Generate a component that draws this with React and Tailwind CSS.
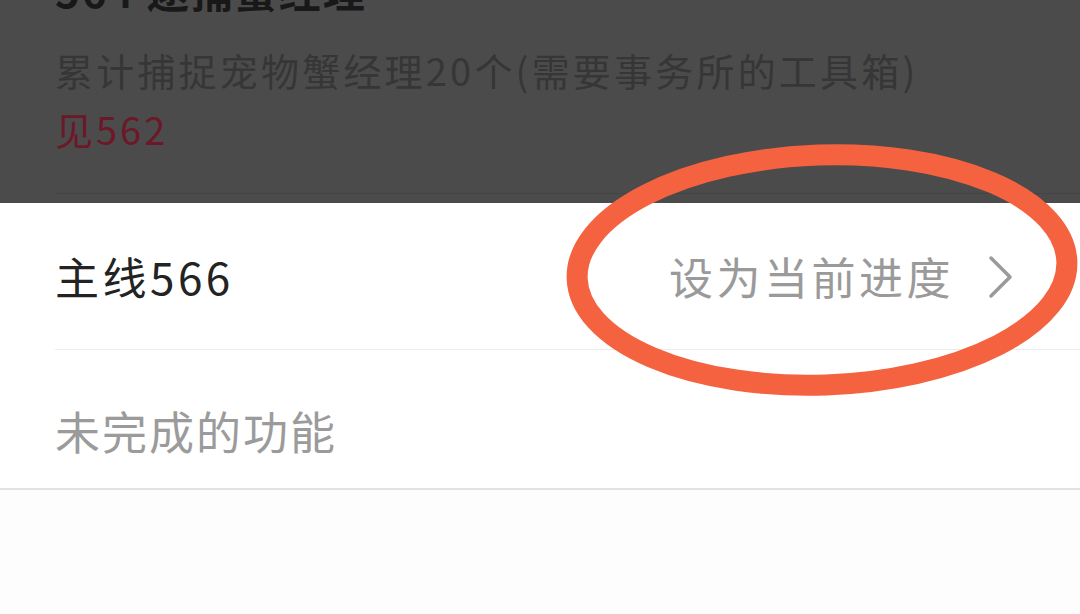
import React from "react";

const cjk = { fontFamily: '"Noto Sans CJK SC", "Noto Sans", sans-serif' };

export default function App() {
  return (
    <div className="relative w-[1080px] h-[614px] overflow-hidden bg-[#fdfdfd]" style={cjk}>
      {/* dimmed list item */}
      <div className="h-[203px] bg-[#4b4b4b] pl-[55px] flex flex-col">
        <div className="mt-[-31px] h-[42px] text-[42px] leading-[42px] font-bold text-[#181818] whitespace-nowrap tracking-[2px]">
          564 逮捕蟹经理
        </div>
        <div className="mt-[40px] text-[38px] leading-[38px] text-[#363636] whitespace-nowrap tracking-[3.2px]">
          累计捕捉宠物蟹经理20个(需要事务所的工具箱)
        </div>
        <div className="mt-[21px] text-[38px] leading-[38px] text-[#6c1828] whitespace-nowrap tracking-[3px]">
          见562
        </div>
        <div className="mt-[45px] h-px bg-[#444444]" />
      </div>

      {/* list rows */}
      <div className="bg-white">
        <div className="ml-[55px] h-[147px] flex items-center justify-between border-b border-[#ececec] pr-[66px]">
          <span className="text-[44px] leading-[44px] text-[#232323] tracking-[3.5px]">主线566</span>
          <div className="flex items-center gap-[34px]">
            <span className="text-[44px] leading-[44px] text-[#9a9a9a] tracking-[3.5px]">设为当前进度</span>
            <svg width="26" height="44" viewBox="0 0 26 44" className="mt-[2px]">
              <polyline
                points="3,3 22,22 3,41"
                fill="none"
                stroke="#9a9a9a"
                strokeWidth="3.5"
                strokeLinecap="round"
                strokeLinejoin="round"
              />
            </svg>
          </div>
        </div>
        <div className="pl-[55px] h-[138px] pt-[58px]">
          <span className="text-[45px] leading-[45px] text-[#9b9b9b] tracking-[2px]">未完成的功能</span>
        </div>
      </div>
      <div className="h-[2px] bg-[#e2e2e2]" />

      {/* hand-drawn annotation ellipse */}
      <svg
        className="absolute left-[557px] top-[140px] pointer-events-none"
        width="530"
        height="262"
        viewBox="0 0 530 262"
      >
        <ellipse
          cx="265"
          cy="130"
          rx="245"
          ry="115"
          fill="none"
          stroke="#f4623f"
          strokeWidth="21"
          transform="rotate(-2 265 130)"
        />
      </svg>
    </div>
  );
}
